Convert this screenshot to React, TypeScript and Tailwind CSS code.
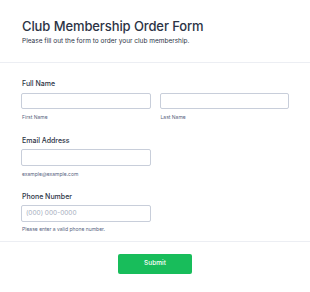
export default function App() {
  return (
    <div className="w-[310px] h-[292px] bg-white font-['Inter',sans-serif] text-[#2c3345] overflow-hidden">
      {/* Header */}
      <div className="px-[22px] pt-[18px] pb-[16px] border-b border-[#eceef3]">
        <h1 className="text-[13px] leading-[16px] font-medium tracking-[-0.1px]">Club Membership Order Form</h1>
        <p className="text-[6.5px] leading-[10px] mt-[2px] text-[#2c3345]">
          Please fill out the form to order your club membership.
        </p>
      </div>

      {/* Fields */}
      <div className="px-[21px] pt-[16px] pb-[8px] border-b border-[#eceef3]">
        <div>
          <label className="block text-[7px] leading-[10px] font-medium ml-[1px]">Full Name</label>
          <div className="flex gap-[9px] mt-[4px]">
            <div className="w-[131px]">
              <div className="h-[16px] border border-[#c8ceda] rounded-[2px] bg-white" />
              <div className="text-[5px] leading-[8px] text-[#57647e] mt-[4px] ml-[1px]">First Name</div>
            </div>
            <div className="w-[131px]">
              <div className="h-[16px] border border-[#c8ceda] rounded-[2px] bg-white" />
              <div className="text-[5px] leading-[8px] text-[#57647e] mt-[4px] ml-[1px]">Last Name</div>
            </div>
          </div>
        </div>

        <div className="mt-[15px]">
          <label className="block text-[7px] leading-[10px] font-medium ml-[1px]">Email Address</label>
          <div className="w-[130px] mt-[3px]">
            <div className="h-[17px] border border-[#c8ceda] rounded-[2px] bg-white" />
            <div className="text-[5px] leading-[8px] text-[#57647e] mt-[4px] ml-[1px]">example@example.com</div>
          </div>
        </div>

        <div className="mt-[14px]">
          <label className="block text-[7px] leading-[10px] font-medium ml-[1px]">Phone Number</label>
          <div className="w-[130px] mt-[3px]">
            <div className="h-[17px] border border-[#c8ceda] rounded-[2px] bg-white flex items-center px-[4px] text-[6.5px] text-[#a6adbd]">
              (000) 000-0000
            </div>
            <div className="text-[5px] leading-[8px] text-[#57647e] mt-[3px] ml-[1px]">Please enter a valid phone number.</div>
          </div>
        </div>
      </div>

      {/* Submit */}
      <div className="flex justify-center pt-[12px]">
        <button className="w-[74px] h-[20px] rounded-[2px] bg-[#18bd5b] text-white text-[6.5px] font-medium">
          Submit
        </button>
      </div>
    </div>
  );
}
